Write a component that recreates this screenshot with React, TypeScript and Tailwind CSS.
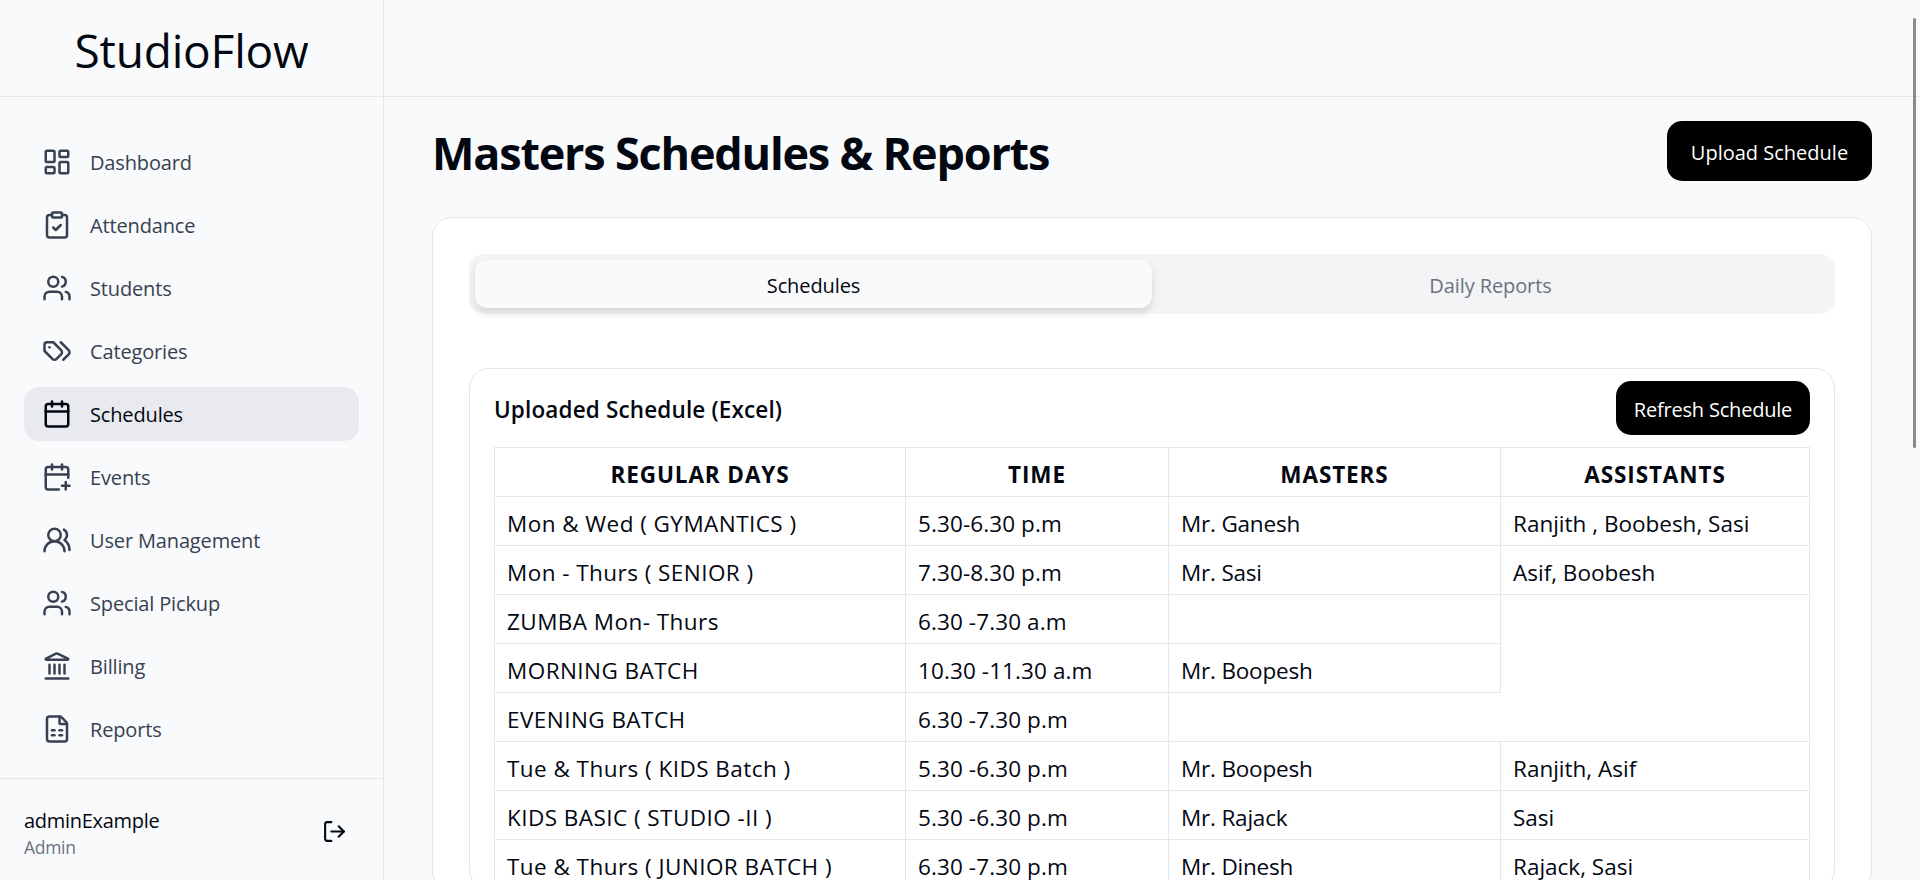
import {
  Calendar,
  CalendarPlus,
  ClipboardCheck,
  FileSpreadsheet,
  Landmark,
  LayoutDashboard,
  LogOut,
  Users,
  UsersRound,
} from "lucide-react";

function TagsIcon({ size }: { size: number }) {
  return (
    <svg
      width={size}
      height={size}
      viewBox="0 0 24 24"
      fill="none"
      stroke="currentColor"
      strokeWidth={2}
      strokeLinecap="round"
      strokeLinejoin="round"
    >
      <path d="M9 5H4a2 2 0 0 0-2 2v5l6.29 6.29c.94.94 2.48.94 3.42 0l3.58-3.58c.94-.94.94-2.48 0-3.42L9 5Z" />
      <path d="M6 9.01V9" />
      <path d="m15 5 6.3 6.3a2.4 2.4 0 0 1 0 3.4L17 19" />
    </svg>
  );
}

const navItems = [
  { label: "Dashboard", icon: LayoutDashboard },
  { label: "Attendance", icon: ClipboardCheck },
  { label: "Students", icon: Users },
  { label: "Categories", icon: TagsIcon },
  { label: "Schedules", icon: Calendar, active: true },
  { label: "Events", icon: CalendarPlus },
  { label: "User Management", icon: UsersRound },
  { label: "Special Pickup", icon: Users },
  { label: "Billing", icon: Landmark },
  { label: "Reports", icon: FileSpreadsheet },
];

const cell = "border border-[#e5e7eb] px-3 pt-[5px] h-[49px] text-left font-normal";
const head = "border border-[#e5e7eb] px-3 pt-[5px] h-[49px] text-center font-bold tracking-[0.9px]";

const col1 = `${cell} tracking-[0.45px]`;
const col2 = `${cell} tracking-[0.1px]`;
const col3 = `${cell} tracking-[-0.2px]`;
const col4 = `${cell} tracking-normal`;

function Sidebar() {
  return (
    <aside className="flex h-full w-[384px] shrink-0 flex-col border-r border-[#e5e7eb]">
      <div className="flex h-[97px] items-center justify-center border-b border-[#e5e7eb] pt-[5px] text-[46px] tracking-[-0.2px] text-[#030712]">
        StudioFlow
      </div>
      <nav className="flex flex-1 flex-col gap-[9px] px-6 pt-[38px]">
        {navItems.map((item) => (
          <a
            key={item.label}
            className={
              item.active
                ? "flex h-[54px] items-center gap-[18px] rounded-[15px] bg-[#e8eaef] px-[18px] text-[20px] text-[#030712]"
                : "flex h-[54px] items-center gap-[18px] rounded-[15px] px-[18px] text-[20px] text-[#374151]"
            }
          >
            <item.icon size={30} />
            <span className="pt-[2px] tracking-[-0.15px]">{item.label}</span>
          </a>
        ))}
      </nav>
      <div className="flex h-[102px] items-center justify-between border-t border-[#e5e7eb] pl-6 pr-9 pt-[4px]">
        <div className="pt-[2px]">
          <div className="text-[20px] leading-[28px] text-[#030712]">adminExample</div>
          <div className="text-[17.5px] leading-[24px] text-[#6b7280]">Admin</div>
        </div>
        <LogOut size={25} className="text-[#030712]" />
      </div>
    </aside>
  );
}

function ScheduleTable() {
  return (
    <table className="w-full table-fixed border-collapse text-[22.5px] text-[#030712]">
      <colgroup>
        <col className="w-[411px]" />
        <col className="w-[263px]" />
        <col className="w-[332px]" />
        <col className="w-[309px]" />
      </colgroup>
      <thead>
        <tr>
          <th className={head}>REGULAR DAYS</th>
          <th className={head}>TIME</th>
          <th className={head}>MASTERS</th>
          <th className={head}>ASSISTANTS</th>
        </tr>
      </thead>
      <tbody>
        <tr>
          <td className={col1}>Mon &amp; Wed ( GYMANTICS )</td>
          <td className={col2}>5.30-6.30 p.m</td>
          <td className={col3}>Mr. Ganesh</td>
          <td className={col4}>Ranjith , Boobesh, Sasi</td>
        </tr>
        <tr>
          <td className={col1}>Mon - Thurs ( SENIOR )</td>
          <td className={col2}>7.30-8.30 p.m</td>
          <td className={col3}>Mr. Sasi</td>
          <td className={col4}>Asif, Boobesh</td>
        </tr>
        <tr>
          <td className={col1}>ZUMBA Mon- Thurs</td>
          <td className={col2}>6.30 -7.30 a.m</td>
          <td className={col3}></td>
          <td rowSpan={2} className={`${col4} border-b-0`}></td>
        </tr>
        <tr>
          <td className={col1}>MORNING BATCH</td>
          <td className={col2}>10.30 -11.30 a.m</td>
          <td className={col3}>Mr. Boopesh</td>
        </tr>
        <tr>
          <td className={col1}>EVENING BATCH</td>
          <td className={col2}>6.30 -7.30 p.m</td>
          <td colSpan={2} className={`${col3} border-t-0`}></td>
        </tr>
        <tr>
          <td className={col1}>Tue &amp; Thurs ( KIDS Batch )</td>
          <td className={col2}>5.30 -6.30 p.m</td>
          <td className={col3}>Mr. Boopesh</td>
          <td className={col4}>Ranjith, Asif</td>
        </tr>
        <tr>
          <td className={col1}>KIDS BASIC ( STUDIO -II )</td>
          <td className={col2}>5.30 -6.30 p.m</td>
          <td className={col3}>Mr. Rajack</td>
          <td className={col4}>Sasi</td>
        </tr>
        <tr>
          <td className={col1}>Tue &amp; Thurs ( JUNIOR BATCH )</td>
          <td className={col2}>6.30 -7.30 p.m</td>
          <td className={col3}>Mr. Dinesh</td>
          <td className={col4}>Rajack, Sasi</td>
        </tr>
      </tbody>
    </table>
  );
}

export default function App() {
  return (
    <div className="relative flex h-[880px] overflow-hidden bg-[#f9fafb] font-['Open_Sans',sans-serif] tracking-[-0.3px]">
      <Sidebar />
      <div className="min-w-0 flex-1">
        <div className="h-[97px] border-b border-[#e5e7eb]" />
        <main className="px-12 pt-6">
          <div className="flex h-[60px] items-center justify-between">
            <h1 className="pt-[3px] text-[45px] font-bold tracking-[-1.2px] text-[#030712]">
              Masters Schedules &amp; Reports
            </h1>
            <button className="h-[60px] w-[205px] rounded-[15px] bg-black pt-[3px] text-[20px] tracking-normal text-white">
              Upload Schedule
            </button>
          </div>
          <section className="mt-9 rounded-[20px] border border-[#e5e7eb] bg-white px-9 pt-9">
            <div className="flex h-[60px] rounded-[15px] bg-[#f3f4f6] p-[6px]">
              <button className="flex-1 rounded-[12px] bg-[#f9fafb] pt-[4px] text-[20px] tracking-[-0.1px] text-[#030712] shadow-[0_5px_8px_rgba(0,0,0,0.12)]">
                Schedules
              </button>
              <button className="flex-1 pt-[4px] text-[20px] tracking-[-0.1px] text-[#6b7280]">Daily Reports</button>
            </div>
            <div className="mt-[54px] rounded-[20px] border border-[#e5e7eb] bg-white px-6 pt-3">
              <div className="flex h-[54px] items-center justify-between">
                <h2 className="pt-[3px] text-[22.5px] font-semibold tracking-[0.15px] text-[#030712]">
                  Uploaded Schedule (Excel)
                </h2>
                <button className="h-[54px] w-[194px] rounded-[15px] bg-black pt-[3px] text-[20px] tracking-[-0.2px] text-white">
                  Refresh Schedule
                </button>
              </div>
              <div className="mt-3">
                <ScheduleTable />
              </div>
            </div>
          </section>
        </main>
      </div>
      <div className="absolute right-[4px] top-[18px] h-[430px] w-[3px] rounded-full bg-[#8a8a8a]" />
    </div>
  );
}
